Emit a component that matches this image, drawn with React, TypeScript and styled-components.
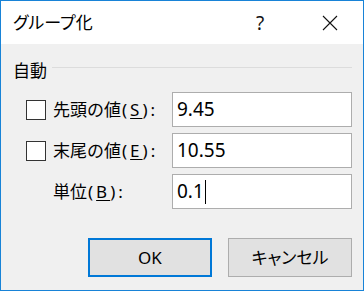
import React from "react";
import styled, { createGlobalStyle } from "styled-components";

const Global = createGlobalStyle`
  html, body { margin: 0; padding: 0; background: #ffffff; }
  body { font-family: "Noto Sans", "Noto Sans CJK JP", sans-serif; }
  * { box-sizing: border-box; }
`;

const Window = styled.div`
  width: 364px;
  height: 291px;
  border: 1px solid #1883d7;
  background: #f0f0f0;
  display: flex;
  flex-direction: column;
  font-family: "Noto Sans", "Noto Sans CJK JP", sans-serif;
  color: #000;
`;

const TitleBar = styled.div`
  height: 43px;
  background: #ffffff;
  display: flex;
  align-items: center;
  flex-shrink: 0;
`;

const Title = styled.div`
  flex: 1;
  padding-left: 12px;
  font-size: 17px;
  font-feature-settings: "palt";
  line-height: 1;
`;

const TitleButton = styled.div<{ $w: number }>`
  width: ${(p) => p.$w}px;
  height: 43px;
  display: flex;
  align-items: center;
  justify-content: center;
  font-size: 19px;
  font-family: "Noto Sans", sans-serif;
  color: #111;
`;

const Body = styled.div`
  flex: 1;
  padding: 16px 11px 0 12px;
  display: flex;
  flex-direction: column;
`;

const GroupHeader = styled.div`
  height: 20px;
  display: flex;
  align-items: center;
  font-size: 17px;
  line-height: 1;
`;

const GroupLine = styled.div`
  flex: 1;
  height: 1px;
  background: #dcdcdc;
  margin-left: 5px;
  align-self: center;
  margin-top: -5px;
`;

const Form = styled.div`
  margin-top: 12px;
  display: flex;
  flex-direction: column;
  gap: 6px;
`;

const Row = styled.div`
  display: flex;
  align-items: center;
  padding-left: 13px;
  height: 35px;
`;

const CheckBox = styled.div`
  width: 20px;
  height: 20px;
  border: 1px solid #333333;
  background: #ffffff;
  margin-right: 7px;
  flex-shrink: 0;
`;

const Spacer = styled.div`
  width: 27px;
  flex-shrink: 0;
`;

const Label = styled.div`
  flex: 1;
  font-size: 17px;
  line-height: 1;
  u { text-underline-offset: 2px; }
`;

const Key = styled.span`
  letter-spacing: 3px;
  margin-left: 1px;
`;

const Field = styled.div`
  width: 180px;
  height: 35px;
  border: 1px solid #adadad;
  background: #ffffff;
  display: flex;
  align-items: center;
  padding-left: 4px;
  font-size: 19px;
  font-family: "Noto Sans", sans-serif;
  line-height: 1;
`;

const Caret = styled.span`
  display: inline-block;
  width: 1px;
  height: 24px;
  background: #000;
  margin-left: 1px;
`;

const ButtonRow = styled.div`
  margin-top: 29px;
  display: flex;
  justify-content: flex-end;
  gap: 16px;
`;

const Button = styled.div<{ $primary?: boolean }>`
  width: 124px;
  height: 39px;
  background: #e1e1e1;
  border: ${(p) => (p.$primary ? "2px solid #0078d7" : "1px solid #adadad")};
  display: flex;
  align-items: center;
  justify-content: center;
  font-size: 17px;
  font-feature-settings: "palt";
  line-height: 1;
`;

const CloseIcon = () => (
  <svg width="16" height="16" viewBox="0 0 16 16">
    <path d="M1 1 L15 15 M15 1 L1 15" stroke="#111" strokeWidth="1.1" fill="none" />
  </svg>
);

export default function App() {
  return (
    <>
      <Global />
      <Window>
        <TitleBar>
          <Title>グループ化</Title>
          <TitleButton $w={74}>?</TitleButton>
          <TitleButton $w={66}>
            <CloseIcon />
          </TitleButton>
        </TitleBar>
        <Body>
          <GroupHeader>
            自動
            <GroupLine />
          </GroupHeader>
          <Form>
            <Row>
              <CheckBox />
              <Label>
                先頭の値<Key>(<u>S</u>):</Key>
              </Label>
              <Field>9.45</Field>
            </Row>
            <Row>
              <CheckBox />
              <Label>
                末尾の値<Key>(<u>E</u>):</Key>
              </Label>
              <Field>10.55</Field>
            </Row>
            <Row>
              <Spacer />
              <Label>
                単位<Key>(<u>B</u>):</Key>
              </Label>
              <Field>
                0.1
                <Caret />
              </Field>
            </Row>
          </Form>
          <ButtonRow>
            <Button $primary>OK</Button>
            <Button>キャンセル</Button>
          </ButtonRow>
        </Body>
      </Window>
    </>
  );
}
